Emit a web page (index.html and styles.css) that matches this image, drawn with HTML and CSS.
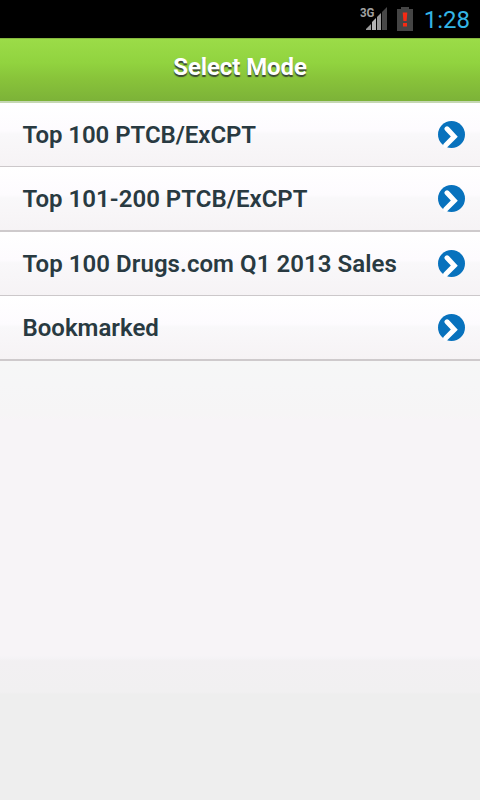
FILE: index.html
```html
<!DOCTYPE html>
<html lang="en">
<head>
<meta charset="utf-8">
<title>Select Mode</title>
<link rel="stylesheet" href="styles.css">
</head>
<body>
<svg width="0" height="0" class="defs">
  <symbol id="go" viewBox="0 0 27 27"><circle cx="13.5" cy="13.5" r="13.5" fill="#0872bd"/><path d="M9 7.8l7.3 7.8-8.6 8.6" fill="none" stroke="#fff" stroke-width="5" stroke-linecap="round" stroke-linejoin="miter"/></symbol>
</svg>
<div class="status">
  <svg class="signal" width="30" height="26" viewBox="0 0 30 26">
    <text x="0" y="12" class="net" textLength="14.5" lengthAdjust="spacingAndGlyphs">3G</text>
    <path d="M6 25v-1l5-5v6z" fill="#999"/><path d="M12 25v-8l4-4v12z" fill="#b5b5b5"/><path d="M17 25V12l4-4v17z" fill="#999"/><path d="M22 25V7l5-5v23z" fill="#484848"/>
  </svg>
  <svg class="battery" width="16" height="24" viewBox="0 0 16 24">
    <path d="M4 0h8v2h4v22H0V2h4z" fill="#454545"/><path d="M5.7 5.5h4.6l-.7 8.5H6.4zM6 16h4v3.6H6z" fill="#f52a14"/>
  </svg>
  <span class="clock">1:28</span>
</div>
<header class="header"><h1>Select Mode</h1></header>
<ul class="modes">
  <li><span class="m1">Top 100 PTCB/ExCPT</span><svg><use href="#go"/></svg></li>
  <li><span class="m2">Top 101-200 PTCB/ExCPT</span><svg><use href="#go"/></svg></li>
  <li><span class="m3">Top 100 Drugs.com Q1 2013 Sales</span><svg><use href="#go"/></svg></li>
  <li><span class="m4">Bookmarked</span><svg><use href="#go"/></svg></li>
</ul>
</body>
</html>
```
FILE: styles.css
```css
* { box-sizing: border-box; }
html { background: #eee; }
body {
  margin: 0;
  height: 800px;
  overflow: hidden;
  font-family: Roboto, "Liberation Sans", sans-serif;
  background: linear-gradient(#f6f7f7 361px, #f6f6f7 384px, #f6f5f6 414px, #f7f4f7 420px, #f7f4f7 655px, #f5f3f6 658px, #f2f0f2 661px, #f1f0f1 692px, #eee 694px);
}
.defs { display: block; }
.status {
  height: 38px;
  background: #000;
  display: flex;
  justify-content: flex-end;
  align-items: flex-start;
  padding-right: 10px;
}
.signal { margin: 5px 7px 0 0; }
.net { font: bold 13px Roboto, sans-serif; fill: #a0a0a0; }
.battery { margin: 7px 11px 0 0; }
.clock { color: #33b5e5; font-size: 24px; line-height: 40px; }
.header {
  height: 65px;
  background: linear-gradient(#9bdc48, #91d33f 24px, #88c33a 40px, #7db338 61px);
  border-top: 1px solid #86b83f;
  border-bottom: 2px solid #c5d7b3;
}
h1 {
  margin: 0;
  font-size: 24px;
  line-height: 56px;
  font-weight: 700;
  letter-spacing: -0.1px;
  text-align: center;
  color: #fff;
  text-shadow: 0 2px 1px #3b4734;
}
.modes { list-style: none; margin: 0; padding: 0; }
.modes li {
  height: 64px;
  display: flex;
  justify-content: space-between;
  align-items: center;
  padding: 0 15px 0 22.5px;
  color: #293a41;
  font-size: 24px;
  font-weight: 600;
  white-space: nowrap;
  background: linear-gradient(#fff, #fdfbfe 28px, #f9f8fa 31px, #f6f3f5 100%);
  border-bottom: 1px solid #ccc8ca;
}
.modes li:nth-child(even) { height: 65px; border-bottom: 2px solid #cecacc; }
.modes li svg { width: 27px; height: 27px; }
.m1 { letter-spacing: -0.05px; }
.m2 { letter-spacing: 0.03px; }
.m3 { letter-spacing: 0.06px; }
```
